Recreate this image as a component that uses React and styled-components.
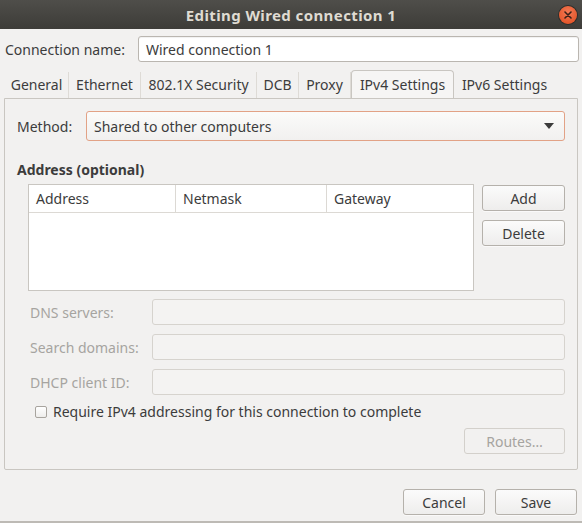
import React from "react"
import styled, { createGlobalStyle } from "styled-components"

const Global = createGlobalStyle`
  html, body {
    margin: 0;
    padding: 0;
    background: #f2f1f0;
  }
  * {
    box-sizing: border-box;
  }
`

const Window = styled.div`
  width: 582px;
  height: 523px;
  display: flex;
  flex-direction: column;
  background: #f2f1f0;
  font-family: "Noto Sans", "DejaVu Sans", sans-serif;
  font-size: 14px;
  color: #3c3c3c;
  border-bottom: 2px solid #bdbab5;
  overflow: hidden;
`

const TitleBar = styled.div`
  position: relative;
  height: 29px;
  flex: none;
  display: flex;
  align-items: center;
  justify-content: center;
  background: linear-gradient(#4f4e4a, #3d3c38);
  color: #dfdbd2;
  font-weight: bold;
  font-size: 15px;
  letter-spacing: 0.4px;
`

const CloseButton = styled.div`
  position: absolute;
  right: 5px;
  top: 6px;
  width: 18px;
  height: 18px;
  border-radius: 50%;
  background: radial-gradient(circle at 50% 35%, #f47a55, #df4a1c);
  box-shadow: 0 0 0 1px #2f2e2b;
  display: flex;
  align-items: center;
  justify-content: center;
`

const Body = styled.div`
  flex: 1;
  display: flex;
  flex-direction: column;
  padding: 7px 3px 0 4px;
`

const Row = styled.div`
  display: flex;
  align-items: center;
  gap: ${(p) => p.$gap || 0}px;
  padding-left: ${(p) => p.$indent || 0}px;
  margin-top: ${(p) => p.$top || 0}px;
`

const Label = styled.div`
  width: ${(p) => (p.$width ? `${p.$width}px` : "auto")};
  flex: none;
  color: ${(p) => (p.$disabled ? "#a6a4a0" : "#3c3c3c")};
  white-space: nowrap;
`

const Entry = styled.div`
  flex: 1;
  height: 26px;
  border-radius: 3px;
  border: 1px solid ${(p) => (p.$disabled ? "#d6d3ce" : "#bab6b0")};
  background: ${(p) => (p.$disabled ? "#f4f3f2" : "#ffffff")};
  box-shadow: ${(p) => (p.$disabled ? "none" : "inset 0 1px 1px rgba(0,0,0,0.06)")};
  padding: 0 7px;
  display: flex;
  align-items: center;
  color: #3c3c3c;
`

const Tabs = styled.div`
  display: flex;
  height: 28px;
  margin-top: 8px;
  padding-left: 1px;
  align-items: flex-end;
`

const Tab = styled.div`
  width: ${(p) => p.$width}px;
  height: ${(p) => (p.$active ? 28 : 26)}px;
  display: flex;
  align-items: center;
  justify-content: center;
  white-space: nowrap;
  color: #3c3c3c;
  ${(p) =>
    p.$active
      ? `
    background: #f6f5f4;
    border: 1px solid #c9c6c1;
    border-bottom: none;
    border-radius: 4px 4px 0 0;
    padding-bottom: 1px;
  `
      : `
    border-right: 1px solid #dedbd6;
    padding-bottom: 2px;
  `}
  &:last-child {
    border-right: none;
  }
`

const Panel = styled.div`
  height: 372px;
  margin-right: 1px;
  border: 1px solid #c9c6c1;
  border-radius: 0 0 2px 2px;
  background: #f2f1f0;
  padding: 12px 12px 0 12px;
  display: flex;
  flex-direction: column;
`

const Combo = styled.div`
  flex: 1;
  height: 30px;
  border: 1px solid #e2a286;
  border-radius: 3px;
  background: linear-gradient(#fbfbfa, #f1f0ef);
  display: flex;
  align-items: center;
  justify-content: space-between;
  padding: 0 8px 0 7px;
`

const Arrow = styled.div`
  width: 0;
  height: 0;
  border-left: 5px solid transparent;
  border-right: 5px solid transparent;
  border-top: 6px solid #3c3c3c;
  margin-right: 2px;
`

const SectionTitle = styled.div`
  font-weight: bold;
  margin-top: 20px;
  height: 18px;
  line-height: 18px;
`

const AddressArea = styled.div`
  display: flex;
  gap: 8px;
  margin-top: 5px;
  padding-left: 11px;
`

const Table = styled.div`
  flex: 1;
  height: 107px;
  background: #ffffff;
  border: 1px solid #c9c6c1;
`

const TableHead = styled.div`
  display: grid;
  grid-template-columns: 147px 151px 1fr;
  height: 28px;
  border-bottom: 1px solid #dcd9d4;
`

const HeadCell = styled.div`
  display: flex;
  align-items: center;
  padding-left: 7px;
  border-right: 1px solid #dcd9d4;
  &:last-child {
    border-right: none;
  }
`

const SideButtons = styled.div`
  width: 83px;
  display: flex;
  flex-direction: column;
  gap: 9px;
  padding-top: 1px;
`

const Button = styled.div`
  width: ${(p) => (p.$width ? `${p.$width}px` : "100%")};
  height: 26px;
  border-radius: 3px;
  border: 1px solid ${(p) => (p.$disabled ? "#d3d0cb" : "#b5b1ab")};
  background: ${(p) =>
    p.$disabled ? "#f2f1f0" : "linear-gradient(#fbfbfb, #eeedec)"};
  box-shadow: ${(p) => (p.$disabled ? "none" : "0 1px 0 rgba(255,255,255,0.6)")};
  display: flex;
  align-items: center;
  justify-content: center;
  color: ${(p) => (p.$disabled ? "#a6a4a0" : "#3c3c3c")};
  flex: none;
`

const Fields = styled.div`
  display: flex;
  flex-direction: column;
  gap: 9px;
  margin-top: 8px;
`

const CheckRow = styled.div`
  display: flex;
  align-items: center;
  gap: 6px;
  padding-left: 18px;
  margin-top: 7px;
`

const CheckBox = styled.div`
  width: 12px;
  height: 12px;
  border: 1px solid #a8a49e;
  border-radius: 2px;
  background: linear-gradient(#ffffff, #eeedeb);
`

const RoutesRow = styled.div`
  display: flex;
  justify-content: flex-end;
  margin-top: 7px;
`

const Footer = styled.div`
  display: flex;
  justify-content: flex-end;
  gap: 10px;
  padding: 19px 2px 0 0;
`

const tabs = [
  ["General", 64],
  ["Ethernet", 72],
  ["802.1X Security", 116],
  ["DCB", 42],
  ["Proxy", 52],
  ["IPv4 Settings", 103],
  ["IPv6 Settings", 101],
]

export default function App() {
  return (
    <>
      <Global />
      <Window>
        <TitleBar>
          Editing Wired connection 1
          <CloseButton>
            <svg width="8" height="8" viewBox="0 0 8 8">
              <path d="M1 1 L7 7 M7 1 L1 7" stroke="#3a2018" strokeWidth="1.6" strokeLinecap="round" />
            </svg>
          </CloseButton>
        </TitleBar>
        <Body>
          <Row $gap={13} $indent={1}>
            <Label>Connection name:</Label>
            <Entry>Wired connection 1</Entry>
          </Row>
          <Tabs>
            {tabs.map(([name, w]) => (
              <Tab key={name} $width={w} $active={name === "IPv4 Settings"}>
                {name}
              </Tab>
            ))}
          </Tabs>
          <Panel>
            <Row $gap={11}>
              <Label $width={58}>Method:</Label>
              <Combo>
                Shared to other computers
                <Arrow />
              </Combo>
            </Row>
            <SectionTitle>Address (optional)</SectionTitle>
            <AddressArea>
              <Table>
                <TableHead>
                  <HeadCell>Address</HeadCell>
                  <HeadCell>Netmask</HeadCell>
                  <HeadCell>Gateway</HeadCell>
                </TableHead>
              </Table>
              <SideButtons>
                <Button>Add</Button>
                <Button>Delete</Button>
              </SideButtons>
            </AddressArea>
            <Fields>
              {["DNS servers:", "Search domains:", "DHCP client ID:"].map((l) => (
                <Row key={l} $indent={13}>
                  <Label $disabled $width={122}>
                    {l}
                  </Label>
                  <Entry $disabled />
                </Row>
              ))}
            </Fields>
            <CheckRow>
              <CheckBox />
              <span>Require IPv4 addressing for this connection to complete</span>
            </CheckRow>
            <RoutesRow>
              <Button $disabled $width={101}>
                Routes…
              </Button>
            </RoutesRow>
          </Panel>
          <Footer>
            <Button $width={82}>Cancel</Button>
            <Button $width={82}>Save</Button>
          </Footer>
        </Body>
      </Window>
    </>
  )
}
